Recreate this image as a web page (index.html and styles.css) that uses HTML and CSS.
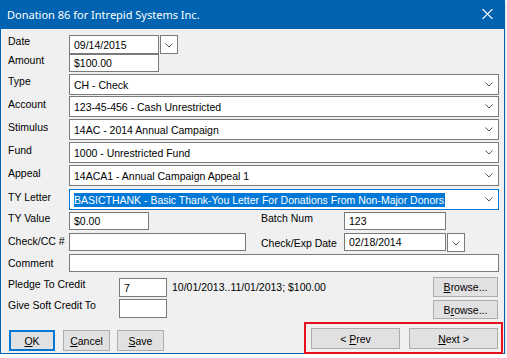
FILE: index.html
```html
<!DOCTYPE html>
<html lang="en">
<head>
  <meta charset="UTF-8" />
  <title>Donation 86</title>
  <link rel="stylesheet" href="styles.css">
</head>
<body>
  <div class="window">
    <div class="titlebar">
      <span class="title">Donation 86 for Intrepid Systems Inc.</span>
      <svg class="close" width="11" height="10" viewBox="0 0 11 10">
        <path d="M0.5 0L10.5 10M10.5 0L0.5 10" stroke="#fff" stroke-width="1.1" fill="none" />
      </svg>
    </div>

    <div class="form">
      <div class="row r-date">
        <span class="lbl tight">Date</span>
        <span class="box w-date">09/14/2015</span>
        <span class="dd"><svg width="8" height="5" viewBox="0 0 8 5"><path d="M0.5 0.5L4 4L7.5 0.5" stroke="#555" fill="none" /></svg></span>
      </div>
      <div class="row r-amount">
        <span class="lbl tight">Amount</span>
        <span class="box w-date">$100.00</span>
      </div>
      <div class="row r-sel mt2">
        <span class="lbl t1">Type</span>
        <span class="select">CH - Check<svg class="chev" width="8" height="5" viewBox="0 0 8 5"><path d="M0.5 0.5L4 4L7.5 0.5" stroke="#555" fill="none" /></svg></span>
      </div>
      <div class="row r-sel mt1">
        <span class="lbl">Account</span>
        <span class="select">123-45-456 - Cash Unrestricted<svg class="chev" width="8" height="5" viewBox="0 0 8 5"><path d="M0.5 0.5L4 4L7.5 0.5" stroke="#555" fill="none" /></svg></span>
      </div>
      <div class="row r-sel mt2">
        <span class="lbl">Stimulus</span>
        <span class="select">14AC - 2014 Annual Campaign<svg class="chev" width="8" height="5" viewBox="0 0 8 5"><path d="M0.5 0.5L4 4L7.5 0.5" stroke="#555" fill="none" /></svg></span>
      </div>
      <div class="row r-sel mt2">
        <span class="lbl">Fund</span>
        <span class="select">1000 - Unrestricted Fund<svg class="chev" width="8" height="5" viewBox="0 0 8 5"><path d="M0.5 0.5L4 4L7.5 0.5" stroke="#555" fill="none" /></svg></span>
      </div>
      <div class="row r-sel mt2">
        <span class="lbl">Appeal</span>
        <span class="select">14ACA1 - Annual Campaign Appeal 1<svg class="chev" width="8" height="5" viewBox="0 0 8 5"><path d="M0.5 0.5L4 4L7.5 0.5" stroke="#555" fill="none" /></svg></span>
      </div>
      <div class="row r-sel mt3">
        <span class="lbl">TY Letter</span>
        <span class="select focused"><span class="picked">BASICTHANK - Basic Thank-You Letter For Donations From Non-Major Donors</span><svg class="chev" width="8" height="5" viewBox="0 0 8 5"><path d="M0.5 0.5L4 4L7.5 0.5" stroke="#555" fill="none" /></svg></span>
      </div>
      <div class="row r-box mt2">
        <span class="lbl tight">TY Value</span>
        <span class="box w-ty">$0.00</span>
        <span class="lbl right-lbl tight">Batch Num</span>
        <span class="box w-right">123</span>
      </div>
      <div class="row r-box mt3">
        <span class="lbl">Check/CC #</span>
        <span class="box w-check"></span>
        <span class="lbl right-lbl check-lbl">Check/Exp Date</span>
        <span class="box w-right">02/18/2014</span>
        <span class="dd"><svg width="8" height="5" viewBox="0 0 8 5"><path d="M0.5 0.5L4 4L7.5 0.5" stroke="#555" fill="none" /></svg></span>
      </div>
      <div class="row r-box mt3">
        <span class="lbl t3">Comment</span>
        <span class="box grow"></span>
      </div>
      <div class="row r-pledge mt5">
        <span class="lbl wide t1">Pledge To Credit</span>
        <span class="box w-small">7</span>
        <span class="note">10/01/2013..11/01/2013; $100.00</span>
        <button class="btn browse"><u>B</u>rowse...</button>
      </div>
      <div class="row r-pledge mt2">
        <span class="lbl wide tight">Give Soft Credit To</span>
        <span class="box w-small"></span>
        <button class="btn browse low">B<u>r</u>owse...</button>
      </div>
      <div class="row footer">
        <button class="btn ok"><u>O</u>K</button>
        <button class="btn cancel"><u>C</u>ancel</button>
        <button class="btn save"><u>S</u>ave</button>
        <div class="nav-box">
          <button class="btn nav">&lt; <u>P</u>rev</button>
          <button class="btn nav next"><u>N</u>ext &gt;</button>
        </div>
      </div>
    </div>
  </div>
</body>
</html>
```

FILE: styles.css
```css
* { box-sizing: border-box; margin: 0; padding: 0; }
body {
  background: #fff;
  font-family: "Liberation Sans", Arial, sans-serif;
  font-size: 10.5px;
  color: #000;
}

.window {
  width: 505px; height: 354px;
  background: #f0f0f0;
  border: 1px solid #0063b1; border-top: none;
  box-shadow: 1px 1px 3px rgba(0,0,0,0.15);
}
.titlebar {
  height: 29px; margin: 0 -1px;
  background: #0063b1; color: #fff;
  display: flex; align-items: center;
  padding: 0 12px 1px 7px;
}
.title { font-family: "Noto Sans", sans-serif; font-size: 11px; flex: 1; }
.close { margin-bottom: 1px; }

.form { padding: 6px 5px 0 7px; }

.row { display: flex; align-items: flex-start; }
.mt1 { margin-top: 1px; }
.mt2 { margin-top: 2px; }
.mt3 { margin-top: 3px; }
.mt5 { margin-top: 5px; }

.r-date { height: 19px; }
.r-amount { height: 18px; }
.r-sel { height: 21px; }
.r-box { height: 18px; }
.r-pledge { height: 20px; }

.lbl { width: 61px; flex: none; padding-top: 2px; line-height: 13px; white-space: nowrap; }
.lbl.tight { padding-top: 0; }
.lbl.t1 { padding-top: 1px; }
.lbl.t3 { padding-top: 3px; }
.lbl.wide { width: 111px; }
.right-lbl { width: 83px; margin-left: 112px; }
.check-lbl { margin-left: 15px; padding-top: 4px; }

.box {
  display: flex; align-items: center;
  height: 18px; padding: 0 4px;
  background: #fff; border: 1px solid #7a7a7a;
  white-space: nowrap;
}
.r-date .box { height: 19px; }
.w-date { width: 90px; }
.w-ty { width: 80px; }
.w-check { width: 177px; }
.w-right { width: 102px; }
.w-small { width: 48px; height: 19px; }
.r-pledge:not(.mt2) .w-small { margin-top: 1px; }
.grow { flex: 1; }

.dd {
  width: 18px; height: 19px; margin-left: 1px;
  background: #fff; border: 1px solid #7a7a7a;
  display: flex; align-items: center; justify-content: center;
  padding-top: 1px;
}

.select {
  flex: 1; height: 21px;
  display: flex; align-items: center;
  padding: 0 4px 0 4px;
  background: #fff; border: 1px solid #7a7a7a;
  white-space: nowrap;
}
.chev { margin-left: auto; margin-right: 1px; }
.select.focused { border-color: #0078d7; }
.picked { background: #0078d7; color: #fff; line-height: 14px; padding-right: 1px; }

.note { margin-left: 5px; padding-top: 4px; white-space: nowrap; }

.btn {
  font-family: inherit; font-size: 10.5px; color: #000;
  background: #e1e1e1; border: 1px solid #adadad;
  height: 21px;
}
.browse { width: 65px; height: 20px; margin-left: auto; margin-right: 1px; }
.browse.low { height: 19px; margin-top: 1px; }

.footer { margin-top: 3px; height: 31px; }
.ok { width: 46px; margin: 8px 0 0 1px; border: 2px solid #0078d7; }
.cancel { width: 47px; margin: 8px 0 0 8px; }
.save { width: 47px; margin: 8px 0 0 7px; }
.nav-box {
  margin-left: auto; margin-right: -4px;
  width: 199px; height: 32px;
  border: 2px solid #e8101a;
  padding: 4px 0 0 5px;
  display: flex; align-items: flex-start;
}
.nav { width: 89px; }
.next { margin-left: 9px; }
```
